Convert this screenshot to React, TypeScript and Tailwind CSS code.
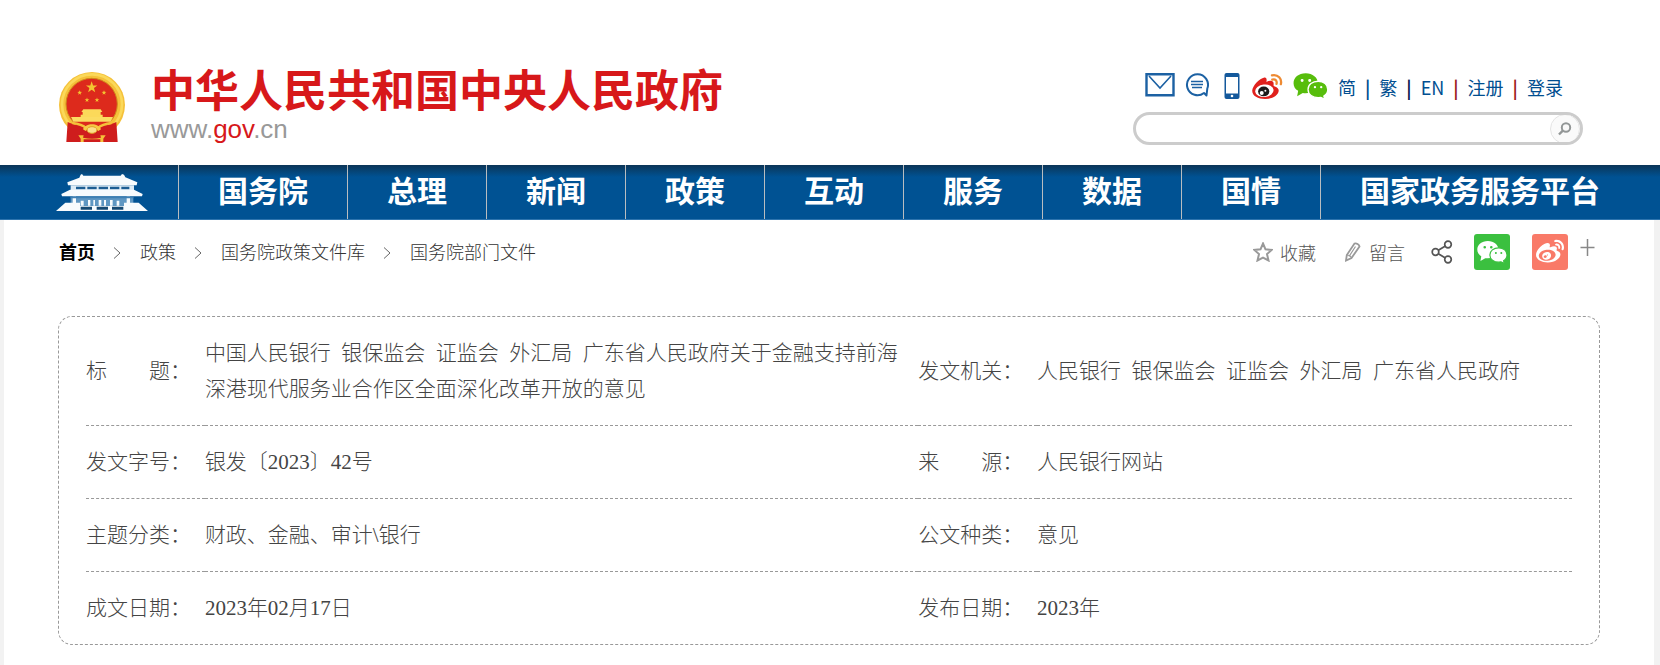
import React from 'react';
import { FaWeibo } from 'react-icons/fa';

const navItems = ['国务院', '总理', '新闻', '政策', '互动', '服务', '数据', '国情', '国家政务服务平台'];

const crumbs = ['首页', '政策', '国务院政策文件库', '国务院部门文件'];

const rows = [
  [
    '标　　题：',
    '中国人民银行\u2002银保监会\u2002证监会\u2002外汇局\u2002广东省人民政府关于金融支持前海深港现代服务业合作区全面深化改革开放的意见',
    '发文机关：',
    '人民银行\u2002银保监会\u2002证监会\u2002外汇局\u2002广东省人民政府',
  ],
  ['发文字号：', '银发〔2023〕42号', '来　　源：', '人民银行网站'],
  ['主题分类：', '财政、金融、审计\\银行', '公文种类：', '意见'],
  ['成文日期：', '2023年02月17日', '发布日期：', '2023年'],
];

const STAR = 'M0 -10 L2.4 -3.2 L9.5 -3.1 L3.8 1.2 L5.9 8.1 L0 4 L-5.9 8.1 L-3.8 1.2 L-9.5 -3.1 L-2.4 -3.2 Z';

const Emblem: React.FC = () => (
  <svg viewBox="0 0 198 210" className="w-[66px] h-[70px]" aria-hidden="true">
    <circle cx="99" cy="99" r="99" fill="#f5c13a" />
    <circle cx="99" cy="97" r="90" fill="none" stroke="#fbd95a" strokeWidth="8" />
    <circle cx="98" cy="96" r="77" fill="#dd2a1c" stroke="#d08a1c" strokeWidth="3" />
    <g fill="#f3c531">
      <path d={STAR} transform="translate(98 46) scale(1.8)" />
      <path d={STAR} transform="translate(62 62) scale(.75)" />
      <path d={STAR} transform="translate(135 62) scale(.75)" />
      <path d={STAR} transform="translate(84 84) scale(.75)" />
      <path d={STAR} transform="translate(114 84) scale(.75)" />
    </g>
    <path d="M73 112h52l5 8h-5v8h6v7h-66v-7h6v-8h-4z" fill="#fbd95a" />
    <path d="M36 135h126l-7 14H43z" fill="#fbdc62" />
    <path d="M26 150c24 10 44 16 72 6c30 10 52 4 74-6l4 60H22z" fill="#cf1d1d" />
    <path d="M40 153c22 2 32 6 42 16M158 153c-22 2-32 6-42 16" fill="none" stroke="#f5c13a" strokeWidth="8" />
    <path d="M72 172c8-20 46-20 54 0l-8 5c-10-12-28-12-38 0z" fill="#f7ca45" />
    <ellipse cx="99" cy="174" rx="15" ry="10" fill="#fbe08a" stroke="#e2a326" strokeWidth="3" />
    <path d="M58 190h16l-2 7c18 4 36 4 54 0l-2-7h16l-7 10v10h-9v-8H74v8h-9v-10z" fill="#f5c13a" />
  </svg>
);

const Gate: React.FC = () => (
  <svg viewBox="0 0 276 111" className="w-[92px] h-[37px]" aria-hidden="true">
    <path d="M78 0l4 5h112l4-5l6 2l4 8l36 15l-2 9H36l-2-9l36-14l4-9z" fill="#f7fbfd" />
    <path d="M44 34h190v14H44z" fill="#dcebf5" />
    <path d="M60 38h28v8H60zM94 38h28v8H94zM128 38h28v8h-28zM162 38h28v8h-28zM196 38h24v8h-24z" fill="#1b5d93" />
    <path d="M42 47h192l26 13l-2 7H18l-2-7z" fill="#f7fbfd" />
    <path d="M44 67h188v29H44z" fill="#5f97c2" />
    <path d="M50 67h10v28H50zM74 80h9v15h-9zM96 78h7v17h-7zM112 78h5v17h-5zM128 78h8v17h-8zM144 78h6v17h-6zM162 78h8v17h-8zM182 80h8v15h-8zM212 67h10v28h-10z" fill="#f7fbfd" />
    <path d="M44 67h188v6H44z" fill="#3f80b3" />
    <path d="M28 86h44v10h132V86h44l28 25H0z" fill="#f7fbfd" />
    <path d="M74 98h34v9H74zM122 98h34v9h-34zM168 98h34v9h-34z" fill="#164a73" />
  </svg>
);

const WechatMark: React.FC<{ className: string; back: string }> = ({ className, back }) => (
  <svg viewBox="0 0 105 79" className={className} aria-hidden="true">
    <path
      d="M38 1C16 1 1 14 1 31c0 10 5 18 14 23l-3 17 17-10c23 4 46-8 46-29C75 14 59 1 38 1z"
      fill="currentColor"
    />
    <path
      d="M76 25c-18 0-31 11-31 25c0 15 14 25 31 25l8-1 12 6-3-10c8-5 12-12 12-20c0-14-12-25-29-25z"
      fill="currentColor"
      className={back}
      strokeWidth="4"
    />
    <g className={back} strokeWidth="9" strokeLinecap="round">
      <path d="M27 23h.1M50 23h.1" />
      <path d="M66 43h.1M85 43h.1" strokeWidth="7" />
    </g>
  </svg>
);

const WeiboColor: React.FC = () => (
  <svg viewBox="0 0 93 79" className="w-[31px] h-[26px]" aria-hidden="true">
    <path
      d="M37 14c7-1 8 6 6 13c11-5 24-5 22 8c0 3-1 4 4 6c9 3 13 9 11 16c-4 14-22 22-41 22C18 79 0 70 0 54C1 39 22 17 37 14z"
      fill="#e0211d"
    />
    <ellipse cx="37" cy="54" rx="28" ry="19" fill="#fff" transform="rotate(-6 37 54)" />
    <ellipse cx="35" cy="56" rx="17" ry="15" fill="#1c1a1a" />
    <circle cx="29" cy="61" r="6" fill="#fff" />
    <circle cx="40" cy="54" r="3" fill="#fff" />
    <path d="M60 7c19-4 31 11 27 27M61 20c10-3 15 4 13 13" fill="none" stroke="#ee8a32" strokeWidth="7" strokeLinecap="round" />
  </svg>
);

const Header: React.FC = () => (
  <header className="flex h-[165px] items-start justify-between bg-white pl-[59px] pr-[77px]">
    <a href="#" className="mt-[68px] flex gap-[26px] font-['Liberation_Sans','Noto_Sans_CJK_SC',sans-serif]">
      <span className="mt-1">
        <Emblem />
      </span>
      <span className="flex flex-col whitespace-nowrap">
        <span className="text-[44px] font-bold leading-[48px] text-[#d7181a]">中华人民共和国中央人民政府</span>
        <span className="text-[26px] leading-[26px] text-[#999]">
          www.<span className="text-[#d7181a]">gov</span>.cn
        </span>
      </span>
    </a>

    <div className="mt-[73px] w-[450px]">
      <div className="flex h-7 items-start pl-3 text-lg leading-7 text-[#004e90]">
        <a href="#" aria-label="邮箱" className="mr-2.5">
          <svg viewBox="0 0 30 24" className="h-6 w-[30px]" fill="none" stroke="#1c61a3" strokeWidth="2.400">
            <path d="M1.5 1.200h27v21h-27z" />
            <path d="M4 3l11 12L26 3" strokeWidth="1.6" />
          </svg>
        </a>
        <a href="#" aria-label="互动" className="mr-[15px]">
          <svg viewBox="0 0 24 24" className="h-6 w-6" fill="none" stroke="#1c61a3" strokeWidth="2">
            <path d="M21.500 22.500L19 20A10.500 10.500 0 1 1 22.300 15.500L21.500 22.500z" strokeLinejoin="round" />
            <path d="M6 8.500h12M6 11.5h12M7 14.5h10" strokeWidth="1.500" />
          </svg>
        </a>
        <a href="#" aria-label="客户端" className="mr-3">
          <svg viewBox="0 0 16 26" className="h-[26px] w-4">
            <rect x=".5" width="15" height="26" rx="2" fill="#14599c" />
            <path d="M2 4h12v16.500H2z" fill="#fff" />
            <circle cx="8" cy="23" r="1.300" fill="#fff" />
          </svg>
        </a>
        <a href="#" aria-label="微博" className="mr-2.5">
          <WeiboColor />
        </a>
        <a href="#" aria-label="微信" className="mr-2.5 text-[#57bd0c]">
          <WechatMark className="h-[26px] w-[35px]" back="stroke-white" />
        </a>
        <div className="flex gap-[9px] whitespace-nowrap">
          <a href="#">简</a>
          <span className="font-bold">|</span>
          <a href="#">繁</a>
          <span className="font-bold text-[#0a1a4e]">|</span>
          <a href="#">EN</a>
          <span className="font-bold text-[#9b1c1c]">|</span>
          <a href="#">注册</a>
          <span className="font-bold text-[#9b1c1c]">|</span>
          <a href="#">登录</a>
        </div>
      </div>
      <form className="mt-[11px] flex h-[33px] items-center overflow-hidden rounded-full border-[3px] border-[#ccc] bg-white">
        <input type="text" aria-label="搜索" className="h-full min-w-0 flex-1 bg-transparent pl-4 outline-none" />
        <button
          type="button"
          aria-label="搜索"
          className="flex h-[30px] w-[30px] items-center justify-center rounded-full border border-[#e4e4e4] bg-[#fafafa]"
        >
          <svg viewBox="0 0 14 14" className="h-3.5 w-3.5" fill="none" stroke="#939797" strokeWidth="2">
            <circle cx="8" cy="5.500" r="4.200" />
            <path d="M4.800 8.700L1 12.500" strokeWidth="2.400" />
          </svg>
        </button>
      </form>
    </div>
  </header>
);

const Navigation: React.FC = () => (
  <nav className="flex h-[55px] border-b border-[#2d74ae] bg-[#005293] bg-[linear-gradient(#0b3557,#005293_12px)] font-['Liberation_Sans','Noto_Sans_CJK_SC',sans-serif] text-3xl font-bold leading-[54px] text-white">
    <a href="#" aria-label="首页" className="w-[178px] shrink-0 pl-14 pt-[9px]">
      <Gate />
    </a>
    {navItems.map((item) => (
      <a key={item} href="#" className="whitespace-nowrap border-l border-[#b9bdc0] px-[39px] leading-[54px]">
        {item}
      </a>
    ))}
  </nav>
);

const Toolbar: React.FC = () => (
  <div className="flex items-center justify-between pr-[5px]">
    <div className="flex items-center pl-px pt-0.5 font-['Liberation_Serif','Noto_Sans_CJK_SC',serif] text-lg leading-7 text-[#333]">
      {crumbs.map((crumb, i) => (
        <React.Fragment key={crumb}>
          {i > 0 && (
            <svg viewBox="0 0 9 12" className="mx-[18px] h-3 w-[9px]" fill="none" stroke="#666" aria-hidden="true">
              <path d="M1 .5L7 6L1 11.500" />
            </svg>
          )}
          <a href="#" className={i === 0 ? 'font-bold text-black' : 'font-light'}>
            {crumb}
          </a>
        </React.Fragment>
      ))}
    </div>

    <div className="flex items-center text-lg font-light leading-7 text-[#555]">
      <button type="button" className="mr-[29px] flex items-center gap-[7px]">
        <svg viewBox="0 0 20 20" className="h-5 w-5" fill="none" stroke="#999" strokeWidth="2">
          <path d="M10 1.500l2.500 5.800 6.200.6-4.700 4.200 1.500 6.400L10 15.600l-5.500 2.900L6 12.100 1.300 7.900l6.200-.6z" />
        </svg>
        收藏
      </button>
      <button type="button" className="mr-[26px] flex items-center gap-2">
        <svg viewBox="0 0 16 20" className="h-5 w-4" fill="none" stroke="#999" strokeWidth="1.800">
          <path d="M1 18.500l.8-5.500L9.500 1.500c2-.6 4.500.8 5 3L6.500 16z" />
          <path d="M10.500 4.500L4 14.500M1.800 13c2 0 4 1 4.700 3" strokeWidth="1.200" />
        </svg>
        留言
      </button>
      <button type="button" aria-label="分享" className="mr-[21px]">
        <svg viewBox="0 0 22 24" className="h-6 w-[22px]" fill="none" stroke="#555" strokeWidth="1.700">
          <circle cx="4.500" cy="12" r="3.300" />
          <circle cx="17" cy="4.500" r="3.300" />
          <circle cx="17" cy="19.500" r="3.300" />
          <path d="M7.300 10.300L14 6.300M7.300 13.700L14 17.700" />
        </svg>
      </button>
      <button type="button" aria-label="微信" className="mr-[22px] flex h-9 w-9 items-center justify-center rounded-[3px] bg-[#3bc03f] text-white">
        <WechatMark className="h-6 w-[30px]" back="stroke-[#3bc03f]" />
      </button>
      <button type="button" aria-label="微博" className="mr-3 flex h-9 w-9 items-center justify-center rounded-[3px] bg-[#f97a68] text-white">
        <FaWeibo className="h-7 w-7" />
      </button>
      <button type="button" aria-label="放大" className="mb-2.5">
        <svg viewBox="0 0 15 17" className="h-[17px] w-[15px]" stroke="#888" strokeWidth="1.500">
          <path d="M.5 8.500h14M7.500 0v17" />
        </svg>
      </button>
    </div>
  </div>
);

const DocumentInfo: React.FC = () => (
  <div className="mt-[46px] rounded-[14px] border border-dashed border-[#999] px-[27px] font-['Liberation_Serif','Noto_Sans_CJK_SC',serif] text-[21px] font-light leading-9 text-[#444]">
    <table className="w-full table-fixed">
      <colgroup>
        <col className="w-[8%]" />
        <col className="w-[48%]" />
        <col className="w-[8%]" />
        <col className="w-[36%]" />
      </colgroup>
      <tbody>
        {rows.map((row) => (
          <tr key={row[0]} className="border-b border-dashed border-[#999] last:border-b-0">
            {row.map((text, i) =>
              i % 2 === 0 ? (
                <th key={text} scope="row" className="whitespace-nowrap py-[18px] text-left font-light">
                  {text}
                </th>
              ) : (
                <td key={text} className="py-[18px] pr-4">
                  {text}
                </td>
              )
            )}
          </tr>
        ))}
      </tbody>
    </table>
  </div>
);

const App: React.FC = () => (
  <div lang="zh-CN" className="min-h-screen overflow-x-hidden bg-[#f2f2f2] font-['Noto_Sans_CJK_SC',sans-serif]">
    <Header />
    <Navigation />
    <main className="ml-1 mr-1.5 min-h-[445px] bg-white pl-[54px] pr-[54px] pt-3.5">
      <Toolbar />
      <DocumentInfo />
    </main>
  </div>
);

export default App;
